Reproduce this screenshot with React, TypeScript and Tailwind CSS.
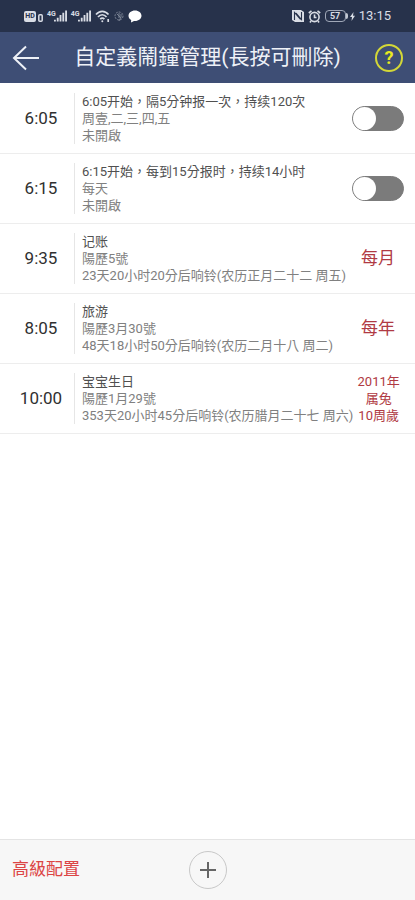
interface Alarm {
  time: string;
  title: string;
  lines: [string, string];
  repeat?: string[];
}

const alarms: Alarm[] = [
  { time: "6:05", title: "6:05开始，隔5分钟报一次，持续120次", lines: ["周壹,二,三,四,五", "未開啟"] },
  { time: "6:15", title: "6:15开始，每到15分报时，持续14小时", lines: ["每天", "未開啟"] },
  { time: "9:35", title: "记账", lines: ["陽歷5號", "23天20小时20分后响铃(农历正月二十二 周五)"], repeat: ["每月"] },
  { time: "8:05", title: "旅游", lines: ["陽歷3月30號", "48天18小时50分后响铃(农历二月十八 周二)"], repeat: ["每年"] },
  {
    time: "10:00",
    title: "宝宝生日",
    lines: ["陽歷1月29號", "353天20小时45分后响铃(农历腊月二十七 周六)"],
    repeat: ["2011年", "属兔", "10周歲"],
  },
];

function Signal() {
  return (
    <span className="flex items-start">
      <span className="text-[7px] leading-[8px] font-bold">4G</span>
      <svg className="-ml-0.5" width="13" height="12" viewBox="0 0 14 12" fill="currentColor" aria-hidden="true">
        <path d="M0 10h2v2H0zM3 8h2v4H3zM6 5h2v7H6zM9 2.500h2V12H9zM12 0h2v12h-2z" />
      </svg>
    </span>
  );
}

function StatusBar() {
  return (
    <div className="flex h-8 items-center justify-between bg-[#27324b] px-6 text-[#d9dde5]">
      <div className="flex items-center gap-1">
        <span className="flex items-end gap-0.5">
          <span className="flex h-[11px] w-3 items-center justify-center rounded-xs bg-[#d9dde5] text-[7px] leading-none font-bold text-[#27324b]">
            HD
          </span>
          <svg width="5" height="8" viewBox="0 0 5 8" fill="none" stroke="currentColor" strokeWidth="1.500" aria-hidden="true">
            <rect x="0.800" y="0.800" width="3.400" height="6.400" rx="1" />
          </svg>
        </span>
        <span className="flex gap-1">
          <Signal />
          <Signal />
        </span>
        <svg width="15" height="13" viewBox="0 0 15 13" fill="none" stroke="currentColor" strokeWidth="1.700" aria-hidden="true">
          <path d="M1 4.500C4.500 .2 10 .2 13.500 4.500M3 7c2.500-3 6-3 8.500 0M5.200 9.200c1.300-1.400 2.900-1.400 4.200 0" />
          <circle cx="7.300" cy="11.300" r="1" fill="currentColor" stroke="none" />
          <path d="M13.200 9v3" />
        </svg>
        <svg className="text-[#7d8596]" width="10" height="12" viewBox="0 0 10 12" fill="none" stroke="currentColor" aria-hidden="true">
          <circle cx="5" cy="6" r="4" strokeDasharray="2 1" />
          <path d="M3 4l4 4M7 4v3L5 11M5 3v5" />
        </svg>
        <svg className="text-white" width="14" height="13" viewBox="0 0 14 13" fill="currentColor" aria-hidden="true">
          <path d="M7 .5C3.200.5.5 2.800.5 5.700c0 1.800 1 3.300 2.700 4.300L3 12.500l3-1.600c4.300.4 7.500-2 7.500-5.200C13.500 2.800 10.800.5 7 .5z" />
        </svg>
      </div>
      <div className="flex items-center gap-1">
        <svg width="12" height="12" viewBox="0 0 12 12" aria-hidden="true">
          <path d="M0 0h9l3 2v10H3L0 10z" fill="currentColor" />
          <path d="M2.500 10V2.500l6 7M9.500 2v7.500L4 3" fill="none" stroke="#27324b" strokeWidth="1.100" />
        </svg>
        <svg width="13" height="13" viewBox="0 0 13 13" fill="none" stroke="currentColor" strokeWidth="1.600" aria-hidden="true">
          <circle cx="6.500" cy="7" r="4.600" />
          <path d="M.8 3L3.500.9M12.200 3L9.500.9M6.500 4.500V7.500h2M3 11l-1 1.500M10 11l1 1.500" />
        </svg>
        <span className="flex items-center">
          <span className="flex h-3 w-[21px] items-center justify-center rounded-sm border border-[#a0a8b8] text-[9px] leading-[10px] font-bold">
            57
          </span>
          <span className="h-1.5 w-0.5 rounded-r-sm bg-[#c3c8d3]" />
          <svg className="ml-0.5" width="5" height="9" viewBox="0 0 5 9" fill="currentColor" aria-hidden="true">
            <path d="M3.500 0L0 5h2L1.500 9 5 3.700H3z" />
          </svg>
        </span>
        <span className="text-[13px]">13:15</span>
      </div>
    </div>
  );
}

function Header() {
  return (
    <header className="flex h-[51px] items-center justify-between bg-[#3e4e75] px-3 text-[#eef1f7]">
      <button type="button" aria-label="返回">
        <svg width="28" height="26" viewBox="0 0 28 26" fill="none" stroke="currentColor" strokeWidth="2" aria-hidden="true">
          <path d="M27 13H2M14 1.500L2 13l12 11.500" />
        </svg>
      </button>
      <h1 className="text-[21px]">自定義鬧鐘管理(長按可刪除)</h1>
      <button
        type="button"
        aria-label="幫助"
        className="flex size-7 items-center justify-center rounded-full border-2 border-[#d3d737] text-[18px] font-bold text-[#e8ea20]"
      >
        ?
      </button>
    </header>
  );
}

function AlarmRow({ alarm }: { alarm: Alarm }) {
  return (
    <li className="flex h-[70px] items-center justify-between border-b border-[#ededed] pr-[11px]">
      <div className="flex items-center">
        <span className="w-[74px] pl-2 text-center text-[17px] text-[#303030]">{alarm.time}</span>
        <div className="border-l border-[#e6e6e6] pl-[7px] text-[13px] leading-[17px] whitespace-nowrap text-[#808080]">
          <p className="text-[#505050]">{alarm.title}</p>
          <p>{alarm.lines[0]}</p>
          <p>{alarm.lines[1]}</p>
        </div>
      </div>
      {alarm.repeat ? (
        <div
          className={
            alarm.repeat.length > 1
              ? "w-[52px] text-center text-[13px] leading-[17px] whitespace-nowrap text-[#b03a43]"
              : "w-[52px] text-center text-[17px] text-[#b03a43]"
          }
        >
          {alarm.repeat.map((text) => (
            <p key={text}>{text}</p>
          ))}
        </div>
      ) : (
        <input
          type="checkbox"
          role="switch"
          aria-label={alarm.title}
          className="flex h-[25px] w-[52px] appearance-none rounded-full border border-[#7b7b7b] bg-[#7b7b7b] before:size-[23px] before:rounded-full before:bg-white checked:justify-end"
        />
      )}
    </li>
  );
}

export default function App() {
  return (
    <div className="flex min-h-screen flex-col bg-white font-[Roboto,'Noto_Sans_CJK_TC',sans-serif]">
      <StatusBar />
      <Header />
      <ul className="flex-1 pt-px">
        {alarms.map((alarm) => (
          <AlarmRow key={alarm.time} alarm={alarm} />
        ))}
      </ul>
      <footer className="grid h-[61px] grid-cols-[1fr_auto_1fr] items-center border-t border-[#e4e4e4] bg-[#f7f7f7] px-3">
        <button type="button" className="justify-self-start text-[17px] text-[#dc4545]">
          高級配置
        </button>
        <button
          type="button"
          aria-label="新增"
          className="flex size-[38px] items-center justify-center rounded-full border border-[#c8c8c8]"
        >
          <svg width="18" height="18" viewBox="0 0 18 18" stroke="#666666" strokeWidth="2" aria-hidden="true">
            <path d="M9 1v16M1 9h16" />
          </svg>
        </button>
      </footer>
    </div>
  );
}
